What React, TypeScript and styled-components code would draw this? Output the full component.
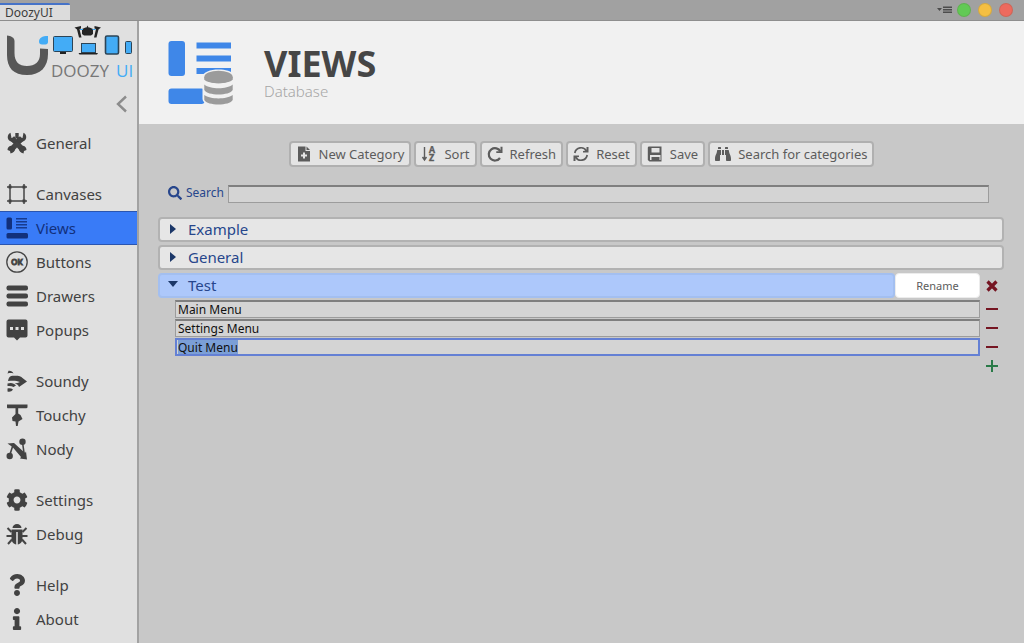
import React, { useEffect, useRef } from "react";
import styled, { createGlobalStyle } from "styled-components";
import { FaBinoculars, FaCog, FaInfo, FaQuestion, FaSearch } from "react-icons/fa";

const uiFont = `"Noto Sans", "Open Sans", sans-serif`;

const GlobalStyle = createGlobalStyle`
  *, *::before, *::after { box-sizing: border-box; }
  body { margin: 0; background: #c8c8c8; font-family: ${uiFont}; }
  button, input { font-family: inherit; margin: 0; }
`;

const Window = styled.div`
  min-height: 100vh;
  display: flex;
  flex-direction: column;
`;

const TitleBar = styled.header`
  display: flex;
  align-items: flex-end;
  justify-content: space-between;
  height: 21px;
  background: #a1a1a1;
  border-bottom: 1px solid #8e8e8e;
`;

const WindowTab = styled.div`
  height: 17px;
  width: 70px;
  padding-left: 5px;
  border-top: 2px solid #4673c8;
  border-top-right-radius: 2px;
  background: #dcdcdc;
  color: #3c3c3c;
  font-size: 12px;
  line-height: 15px;
`;

const WindowControls = styled.div`
  display: flex;
  align-items: center;
  gap: 7px;
  height: 20px;
  padding-right: 11px;
`;

const Light = styled.button<{ $color: string }>`
  width: 14px;
  height: 14px;
  padding: 0;
  border: 1px solid rgba(90, 90, 60, 0.2);
  border-radius: 50%;
  background: ${(p) => p.$color};
`;

const PaneMenu = styled.button`
  display: flex;
  padding: 0;
  margin-right: -3px;
  border: 0;
  background: none;
`;

const Body = styled.div`
  flex: 1;
  display: flex;
`;

const Sidebar = styled.aside`
  flex: 0 0 139px;
  display: flex;
  flex-direction: column;
  background: #e0e0e0;
  border-right: 2px solid #a2a2a2;
`;

const Brand = styled.div`
  display: flex;
  flex-direction: column;
  align-items: flex-end;
  height: 105px;
`;

const CollapseButton = styled.button`
  display: flex;
  margin: 12px 9px 0 0;
  padding: 0;
  border: 0;
  background: none;
`;

const NavGroup = styled.div`
  display: flex;
  flex-direction: column;
  & + & { margin-top: 17px; }
`;

const NavLink = styled.a<{ $active?: boolean }>`
  display: flex;
  align-items: center;
  gap: 8px;
  height: 34px;
  padding-left: 6px;
  font-size: 15px;
  line-height: 20px;
  text-decoration: none;
  color: ${(p) => (p.$active ? "#12307c" : "#424242")};
  background: ${(p) => (p.$active ? "#397bf7" : "transparent")};
  box-shadow: ${(p) => (p.$active ? "inset 0 1px #2a55b0, inset 0 -1px #2a55b0" : "none")};
`;

const Main = styled.main`
  flex: 1;
  min-width: 0;
`;

const PageHeader = styled.div`
  display: flex;
  align-items: center;
  gap: 30px;
  height: 103px;
  padding-left: 29px;
  background: #f1f1f1;
`;

const Title = styled.h1`
  margin: 0;
  font-size: 36px;
  line-height: 36px;
  font-weight: 700;
  color: #464646;
`;

const Subtitle = styled.p`
  margin: 0;
  font-size: 15px;
  line-height: 18px;
  font-weight: 300;
  color: #a6a6a6;
`;

const Toolbar = styled.div`
  display: flex;
  justify-content: center;
  gap: 3px;
  padding-top: 17px;
`;

const ToolButton = styled.button`
  display: flex;
  align-items: center;
  gap: 7px;
  height: 26px;
  padding: 0 5px 1px;
  border: 2px solid #b0b0b0;
  border-radius: 4px;
  background: #e4e4e4;
  color: #5c5c5c;
  font-size: 13px;
  line-height: 18px;
  white-space: nowrap;
`;

const SearchRow = styled.div`
  display: flex;
  align-items: center;
  margin: 18px 35px 14px 29px;
  color: #27468c;
`;

const SearchLabel = styled.label`
  display: flex;
  align-items: center;
  gap: 4px;
  width: 60px;
  height: 18px;
  padding-bottom: 2px;
  font-size: 12px;
  line-height: 16px;
`;

const Field = styled.input`
  flex: 1;
  min-width: 0;
  height: 18px;
  padding: 0 2px;
  border: 1px solid #9c9c9c;
  border-top: 2px solid #7f7f7f;
  border-radius: 0;
  outline: 0;
  background: #d4d4d4;
  color: #111;
  font-size: 12px;
  line-height: 14px;
  &:focus {
    border: 2px solid #6480d4;
    padding: 0 1px;
  }
  &::selection { background: #7b9fd6; color: #111; }
`;

const Categories = styled.div`
  display: flex;
  flex-direction: column;
  gap: 3px;
  margin: 0 20px 0 19px;
`;

const CategoryRow = styled.div`
  display: flex;
`;

const CategoryButton = styled.button<{ $open?: boolean }>`
  flex: 1;
  display: flex;
  align-items: center;
  gap: 10px;
  height: 25px;
  padding: 0 8px 1px;
  border: 2px solid ${(p) => (p.$open ? "#a3bff0" : "#b2b2b2")};
  border-radius: 4px;
  background: ${(p) => (p.$open ? "#adc8fb" : "#e6e6e6")};
  color: #27468c;
  font-size: 15px;
  line-height: 20px;
`;

const RenameButton = styled.button`
  width: 85px;
  height: 25px;
  padding: 0;
  border: 1px solid #ececec;
  border-radius: 4px;
  background: #fff;
  color: #5c5c5c;
  font-size: 11px;
`;

const IconButton = styled.button`
  display: flex;
  align-items: center;
  justify-content: center;
  width: 24px;
  padding: 0;
  border: 0;
  background: none;
`;

const ViewList = styled.div`
  display: flex;
  flex-direction: column;
  gap: 1px;
  margin-top: -1px;
  padding-left: 17px;
`;

const ViewRow = styled.div<{ $end?: boolean }>`
  display: flex;
  height: 18px;
  justify-content: ${(p) => (p.$end ? "flex-end" : "flex-start")};
`;

const ink = "#454545";

const Glyph = ({ children, size = 22, box = 22 }: { children: React.ReactNode; size?: number; box?: number }) => (
  <svg width={size} height={size} viewBox={`0 0 ${box} ${box}`} fill="currentColor" aria-hidden="true">
    {children}
  </svg>
);

const icons: Record<string, React.ReactNode> = {
  General: (
    <Glyph>
      <path d="M6 6L16 17M16 6L6 17" stroke={ink} strokeWidth="5.500" fill="none" />
      <path d="M4.500.8C1 2.500.5 8 5 9.500L9 12l3-4-3.500-3.500L8 6H5.500zM17.500.8c3.500 1.700 4 7.200-.5 8.700L13 12l-3-4 3.500-3.500L14 6h2.500zM9.300 1h3.400v8H9.300zM4.500 21.500l-.5-2.500-2.500-1C1.500 15 4 13 7 14l2 3c0 2-1.500 4-4.500 4.500zM17.500 21.500l.5-2.500 2.500-1C20.500 15 18 13 15 14l-2 3c0 2 1.500 4 4.500 4.500z" />
    </Glyph>
  ),
  Canvases: (
    <Glyph>
      <path d="M4 1v20M18 1v20M1 4h20M1 18h20" stroke={ink} strokeWidth="1.500" fill="none" />
      <path d="M2.500 2.500h3v3h-3zM16.500 2.500h3v3h-3zM2.500 16.500h3v3h-3zM16.500 16.500h3v3h-3z" />
    </Glyph>
  ),
  Views: (
    <Glyph>
      <rect x="0.500" y="0.500" width="5.500" height="12" rx="1.500" />
      <rect x="0.500" y="16" width="21.500" height="5.500" rx="1.500" />
      <path d="M10 1h11v1.500H10zM10 4h11v1.500H10zM10 7h11v1.500H10zM10 10h11v1.500H10z" opacity="0.850" />
    </Glyph>
  ),
  Buttons: (
    <Glyph>
      <circle cx="11" cy="11" r="10.200" fill="none" stroke={ink} strokeWidth="1.300" />
      <text x="11" y="13.500" textAnchor="middle" fontFamily="Lato, sans-serif" fontSize="7.500" fontWeight="900" stroke={ink} strokeWidth="0.900">OK</text>
    </Glyph>
  ),
  Drawers: (
    <Glyph>
      <rect x="0.500" y="0.500" width="21.500" height="5" rx="2" />
      <rect x="0.500" y="8.500" width="21.500" height="5" rx="2" />
      <rect x="0.500" y="16.500" width="21.500" height="5" rx="2" />
    </Glyph>
  ),
  Popups: (
    <Glyph>
      <path fillRule="evenodd" d="M2.500.5h17a2 2 0 0 1 2 2v14a2 2 0 0 1-2 2H14L11 21.500 8 18.500H2.500a2 2 0 0 1-2-2v-14a2 2 0 0 1 2-2zM4 8v3h3V8zM9.500 8v3h3V8zM15 8v3h3V8z" />
    </Glyph>
  ),
  Soundy: (
    <Glyph>
      <path d="M1.500 3.500L2.500.8C5 .5 6.500 1.500 7.500 3.500 5.500 2.800 3.500 3 1.500 3.500zM2.500 9c.5-2 2-3 4-3.200C12 5.500 15 6 16.500 8l4.500 3.500-8 5.500c-.5-2-2-3-4.500-3.500 2-.2 4-.7 5.500-1.500-3.500-1.500-7-1.500-12-1zM1.500 13.500c3.500-1.200 6.500-.5 8.500 2l-2.500 1.500c-1.500-1-3.500-1.300-6-1zM1.500 18.500c2-.5 4-.2 5.500 1-1.500 2-3 2.500-5.500 2z" />
    </Glyph>
  ),
  Touchy: (
    <Glyph>
      <path d="M1 .5h20.500v3l-1 .7h-8.300V9.500L14.500 11l2 4-4 2.500-.8 4.500H10l-.5-4.500-3-.5-.5-3.500 3.500-3.500V4.200H1.500L1 3.500z" />
    </Glyph>
  ),
  Nody: (
    <Glyph>
      <path d="M3.500 18L7 7l11.500 11.500L16.500 4" stroke={ink} strokeWidth="1.600" fill="none" />
      <path d="M1.500 5.500L8 5l11 10 1-1.500 1 8-7-1 1-1.500L6.500 9z" />
      <circle cx="16.500" cy="3.800" r="3.200" />
      <circle cx="3.700" cy="18" r="3.200" />
    </Glyph>
  ),
  Settings: <FaCog size={22} />,
  Debug: (
    <Glyph>
      <path d="M6.500 5a4.500 4 0 0 1 9 0zM5.500 6.500h11V15c0 4-2 6-4.700 6.500V9h-1.600v12.500C7.500 21 5.500 19 5.500 15z" />
      <path d="M5.500 9L1.500 5M16.500 9l4-4M6 13H.5M16 13h5.500M6 16.500L2 21M16 16.500l4 4.500" fill="none" stroke={ink} strokeWidth="2" />
    </Glyph>
  ),
  Help: <FaQuestion size={22} />,
  About: <FaInfo size={22} />,
};

const groups = [
  ["General"],
  ["Canvases", "Views", "Buttons", "Drawers", "Popups"],
  ["Soundy", "Touchy", "Nody"],
  ["Settings", "Debug"],
  ["Help", "About"],
];

const Logo = () => (
  <svg width="137" height="62" viewBox="0 21 137 62" role="img" aria-label="Doozy UI">
    <path d="M7 35.500c4 .5 7.500 2 7.500 5.500V53c0 9 4.500 13 12.500 13s13-4 13-12v-5.500l8 .5v5c0 13-7.500 21-21 21S7 68 7 55z" fill="#575757" />
    <path d="M48 36v6c0 1.500-1 2.500-2.500 2.500H42c-2 0-3-1.200-3-3C39 38 42 36 48 36z" fill="#43acf6" />
    <g fill="#43acf6" stroke="#2c4456" strokeWidth="1">
      <rect x="53.500" y="36.500" width="19" height="15" rx="1" />
      <rect x="81.500" y="43.500" width="14" height="9" />
      <rect x="105.500" y="36" width="13" height="18" rx="1.500" strokeWidth="1.600" />
      <rect x="125.500" y="41.500" width="6" height="12" rx="1" />
    </g>
    <path d="M60 52h6v2h-6zM78.500 53h19.500l-1 1.500H79.500z" fill="#222" />
    <path d="M82 29l3.500-1.500h1L87.500 25.500l1 2h1L93 29v5l-2 1.500h-7L82 34zM74.500 27.500l6.500-1.500v2.500l-1.500.5 2 8.500H79L77 29.500zM101 27.500l-6.500-1.500v2.500l1.500.5-2 8.500h2.500l2-8z" fill="#242424" />
    <path d="M80 29.500h3M92.500 29.500h3" stroke="#43acf6" strokeWidth="1" />
    <text x="51" y="77" fontFamily="Open Sans, sans-serif" fontWeight="400" fontSize="17" fill="#777">DOOZY</text>
    <text x="116" y="77" fontFamily="Open Sans, sans-serif" fontWeight="400" fontSize="17" fill="#43acf6">UI</text>
  </svg>
);

const HeaderIcon = () => (
  <svg width="66" height="66" viewBox="0 0 66 66" aria-hidden="true">
    <g fill="#3f87e8">
      <rect x="0.500" y="1" width="16.500" height="35" rx="3" />
      <rect x="0.500" y="48.500" width="36" height="15.500" rx="3" />
      <path d="M28.500 2.500h34.500v6H28.500zM28.500 15.500h34.500v6H28.500zM28.500 28h34.500v6H28.500z" />
    </g>
    <path d="M34.500 37c0-10 32-10 32 0v22c0 9-32 9-32 0z" fill="#f1f1f1" />
    <g fill="#9b9b9b">
      <ellipse cx="50.500" cy="37" rx="14.200" ry="6.200" />
      <path d="M36.300 44.500c6 5 22.400 5 28.400 0V50c-3 6-25.400 6-28.400 0zM36.300 55c6 4.500 22.400 4.500 28.400 0v5c-3 6-25.400 6-28.400 0z" />
      <path d="M36.300 37h28.400v2.500c-4 5-24.400 5-28.400 0z" />
    </g>
  </svg>
);

const tools: [string, React.ReactNode][] = [
  ["New Category", (
    <Glyph size={16} box={16}>
      <path fillRule="evenodd" d="M2 .5h7.500V5H14v10.500H2zM7 6.500v2H5v2h2v2h2v-2h2v-2H9v-2z" />
      <path d="M10.500.5L14 4h-3.500z" />
    </Glyph>
  )],
  ["Sort", (
    <Glyph size={16} box={16}>
      <path d="M3.500 1v12M1.500 11l2 3 2-3" fill="none" stroke="currentColor" strokeWidth="1.400" />
      <text x="8" y="7" fontFamily="Lato, sans-serif" fontWeight="900" fontSize="8.500" stroke="currentColor" strokeWidth="0.400">A</text>
      <text x="8" y="15" fontFamily="Lato, sans-serif" fontWeight="900" fontSize="8.500" stroke="currentColor" strokeWidth="0.400">Z</text>
    </Glyph>
  )],
  ["Refresh", (
    <Glyph size={16} box={16}>
      <path d="M13.500 5.500A6.200 6.200 0 1 0 13 12" fill="none" stroke="currentColor" strokeWidth="2.200" />
      <path d="M15.500.8v6.200H9.300V5.200h4.200V.8z" />
    </Glyph>
  )],
  ["Reset", (
    <Glyph size={16} box={16}>
      <path d="M1.800 7A6.300 6.300 0 0 1 13.500 5M14.200 9A6.300 6.300 0 0 1 2.500 11" fill="none" stroke="currentColor" strokeWidth="1.700" />
      <path d="M15.500 1v5.500H10V5l3.500-.5V1zM.5 15V9.500H6V11l-3.500.5V15z" />
    </Glyph>
  )],
  ["Save", (
    <Glyph size={16} box={16}>
      <path fillRule="evenodd" d="M1.500.5h13v15H2.500L.8 14V1.500zM4.500 2v4.500h8V2zM3 9v5h1.500v-3h8v3h1V9z" />
      <path d="M5 11h4v3.500H5z" />
    </Glyph>
  )],
  ["Search for categories", <FaBinoculars key="b" size={16} />],
];

const Minus = () => (
  <Glyph size={12} box={12}><path d="M0 5h12v2H0z" fill="#751522" /></Glyph>
);

export default function App() {
  const lastView = useRef<HTMLInputElement>(null);
  useEffect(() => {
    lastView.current?.focus();
    lastView.current?.select();
  }, []);

  const views = ["Main Menu", "Settings Menu", "Quit Menu"];

  return (
    <Window>
      <GlobalStyle />
      <TitleBar>
        <WindowTab>DoozyUI</WindowTab>
        <WindowControls>
          <PaneMenu aria-label="Pane options">
            <svg width="16" height="8" viewBox="0 0 16 8" aria-hidden="true">
              <path d="M0 2h5L2.500 5zM6 .5h9v1.500H6zM6 3h9v1.500H6zM6 5.500h9V7H6z" fill="#4c4c4c" />
            </svg>
          </PaneMenu>
          <Light $color="#62c955" aria-label="Maximize" />
          <Light $color="#f5bf42" aria-label="Minimize" />
          <Light $color="#ed6a5e" aria-label="Close" />
        </WindowControls>
      </TitleBar>
      <Body>
        <Sidebar>
          <Brand>
            <Logo />
            <CollapseButton aria-label="Collapse sidebar">
              <svg width="13" height="18" viewBox="0 0 13 18" aria-hidden="true">
                <path d="M11 1.500L3 9l8 7.500" fill="none" stroke="#8c8c8c" strokeWidth="2.400" />
              </svg>
            </CollapseButton>
          </Brand>
          <nav>
            {groups.map((group) => (
              <NavGroup key={group[0]}>
                {group.map((name) => (
                  <NavLink key={name} href={`#${name.toLowerCase()}`} $active={name === "Views"}>
                    {icons[name]}
                    {name}
                  </NavLink>
                ))}
              </NavGroup>
            ))}
          </nav>
        </Sidebar>
        <Main>
          <PageHeader>
            <HeaderIcon />
            <div>
              <Title>VIEWS</Title>
              <Subtitle>Database</Subtitle>
            </div>
          </PageHeader>
          <Toolbar>
            {tools.map(([name, icon]) => (
              <ToolButton key={name}>
                {icon}
                {name}
              </ToolButton>
            ))}
          </Toolbar>
          <SearchRow>
            <SearchLabel htmlFor="search">
              <FaSearch size={14} />
              Search
            </SearchLabel>
            <Field id="search" type="text" />
          </SearchRow>
          <Categories>
            {["Example", "General"].map((name) => (
              <CategoryRow key={name}>
                <CategoryButton aria-expanded="false">
                  <Glyph size={10} box={10}><path d="M2 0l6 5-6 5z" fill="#1b3768" /></Glyph>
                  {name}
                </CategoryButton>
              </CategoryRow>
            ))}
            <CategoryRow>
              <CategoryButton $open aria-expanded="true">
                <Glyph size={10} box={10}><path d="M0 1h10L5 7z" fill="#1b3768" /></Glyph>
                Test
              </CategoryButton>
              <RenameButton>Rename</RenameButton>
              <IconButton aria-label="Delete category">
                <Glyph size={12} box={12}>
                  <path d="M1.500 1.500l9 9M10.500 1.500l-9 9" stroke="#751522" strokeWidth="3.200" />
                </Glyph>
              </IconButton>
            </CategoryRow>
            <ViewList>
              {views.map((view, i) => (
                <ViewRow key={view}>
                  <Field
                    ref={i === views.length - 1 ? lastView : undefined}
                    type="text"
                    defaultValue={view}
                    aria-label={`View name ${i + 1}`}
                  />
                  <IconButton aria-label={`Remove ${view}`}><Minus /></IconButton>
                </ViewRow>
              ))}
              <ViewRow $end>
                <IconButton aria-label="Add view">
                  <Glyph size={12} box={12}><path d="M5 0h2v5h5v2H7v5H5V7H0V5h5z" fill="#2a7a48" /></Glyph>
                </IconButton>
              </ViewRow>
            </ViewList>
          </Categories>
        </Main>
      </Body>
    </Window>
  );
}
